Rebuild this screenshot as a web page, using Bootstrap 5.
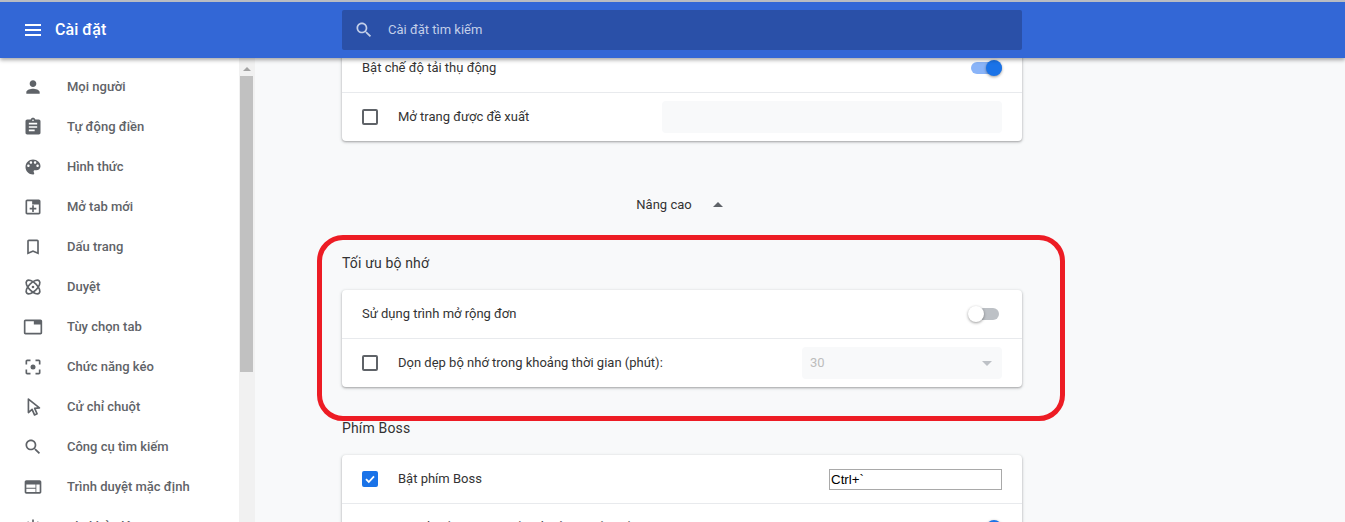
<!DOCTYPE html>
<html lang="vi">
<head>
<meta charset="utf-8">
<title>Cài đặt</title>
<link rel="stylesheet" href="https://cdn.jsdelivr.net/npm/bootstrap@5.3.0/dist/css/bootstrap.min.css">
<style>
html,body{height:522px;overflow:hidden}
body{font-family:Roboto,"Liberation Sans",sans-serif;font-size:13px;background:#f8f9fa;color:#333;border-top:2px solid #b9bcc2}
.top-bar{height:56px;background:#3367d6;box-shadow:0 2px 4px rgba(0,0,0,.35);position:relative;z-index:5;color:#fff}
.menu-btn{width:16px;height:12px;margin-left:25px;border-top:2px solid #fff;border-bottom:2px solid #fff;position:relative;flex:none}
.menu-btn::after{content:"";position:absolute;left:0;right:0;top:3px;height:2px;background:#fff}
.app-title{font-size:16px;font-weight:500;margin-left:14px;width:287px;flex:none;letter-spacing:.05px}
.search-box{width:680px;height:40px;background:#2a50a8;border-radius:2px;flex:none;color:#c3cfe9;padding-left:12px}
.search-box svg{width:20px;height:20px;fill:#c3cfe9;margin-right:14px}
.page-body{height:464px}
.side-nav{width:239px;background:#fff;padding-top:9px;overflow:hidden;flex:none}
.nav-row{height:40px;padding-left:23px;color:#5f6368;font-weight:500;flex:none}
.nav-row svg{width:20px;height:20px;fill:#5f6368;margin-right:24px;flex:none}
.scroll-track{width:16px;background:#f1f1f1;flex:none}
.scroll-arrow{width:0;height:0;border-left:4px solid transparent;border-right:4px solid transparent;border-bottom:4px solid #a3a3a3;margin:9px 0 0 4px}
.scroll-thumb{width:13px;height:296px;background:#c1c1c1;margin:5px 0 0 1px}
.main-pane{overflow:hidden;padding-left:87px}
.main-flow{width:680px;margin-top:-14px}
.set-card{border:0;border-radius:4px;box-shadow:0 1px 2px rgba(60,64,67,.35),0 1px 3px 1px rgba(60,64,67,.12)}
.set-row{height:48px;padding:0 20px;box-sizing:content-box}
.set-row.full-pad{padding:0 20px}
.set-line{border-bottom:1px solid #e8eaed}
.tick{width:16px;height:16px;border:2px solid #5f6368;border-radius:2px;margin-right:20px;flex:none}
.tick-on{background:#1a73e8;border-color:#1a73e8;display:flex;align-items:center;justify-content:center}
.tick-on svg{width:12px;height:12px}
.sw{width:31px;height:12px;border-radius:6px;position:relative;flex:none}
.sw-on{background:#8ab4f8;margin-left:auto}
.sw-off{background:#bdc1c6;margin-left:auto;margin-right:3px;width:29px}
.sw-knob{position:absolute;top:-2px;width:16px;height:16px;border-radius:50%;box-shadow:0 1px 3px rgba(0,0,0,.4)}
.sw-on .sw-knob{right:0;background:#1a73e8}
.sw-off .sw-knob{left:-2px;background:#fff}
.pick-box{width:200px;height:32px;background:#f8f9fa;border-radius:4px;padding:0 8px;color:#bdbdbd;flex:none}
.pick-blank{width:340px}
.pick-arrow{width:0;height:0;border-left:5px solid transparent;border-right:5px solid transparent;border-top:5px solid #bdc1c6;margin-right:2px}
.adv-row{height:48px;margin-top:39px;color:#333;padding:1px 5px 0 0}
.adv-arrow{width:0;height:0;border-left:5px solid transparent;border-right:5px solid transparent;border-bottom:5px solid #5f6368;margin-left:21px}
.sec-title{font-size:14px;height:20px;line-height:20px;color:#333;letter-spacing:.15px;padding-top:1px;margin-top:24px;margin-bottom:18px}
.sec-title-b{margin-top:31px;margin-bottom:17px;padding-top:0}
.key-field{width:173px;height:21px;border:1px solid #a9a9a9;background:#fff;color:#000;font-family:"Liberation Sans",sans-serif;font-size:13.33px;line-height:19px;padding-left:1px;flex:none}
.focus-ring-red{position:absolute;left:317px;top:235px;width:748px;height:186px;border:5px solid #ed1c24;border-radius:26px;z-index:3;pointer-events:none}
</style>
</head>
<body>
<header class="top-bar d-flex align-items-center">
  <div class="menu-btn"></div>
  <div class="app-title">Cài đặt</div>
  <div class="search-box d-flex align-items-center">
    <svg viewBox="0 0 24 24"><path d="M15.5 14h-.79l-.28-.27C15.41 12.59 16 11.11 16 9.5 16 5.91 13.09 3 9.5 3S3 5.91 3 9.5 5.91 16 9.5 16c1.61 0 3.09-.59 4.23-1.57l.27.28v.79l5 4.99L20.49 19l-4.99-5zm-6 0C7.01 14 5 11.99 5 9.5S7.01 5 9.5 5 14 7.01 14 9.5 11.99 14 9.5 14z"/></svg>
    <span>Cài đặt tìm kiếm</span>
  </div>
</header>
<div class="page-body d-flex">
  <nav class="side-nav d-flex flex-column">
    <div class="nav-row d-flex align-items-center"><svg viewBox="0 0 24 24"><path d="M12 12c2.21 0 4-1.79 4-4s-1.79-4-4-4-4 1.79-4 4 1.79 4 4 4zm0 2c-2.67 0-8 1.34-8 4v2h16v-2c0-2.66-5.33-4-8-4z"/></svg>Mọi người</div>
    <div class="nav-row d-flex align-items-center"><svg viewBox="0 0 24 24"><path d="M19 3h-4.18C14.4 1.84 13.3 1 12 1c-1.3 0-2.4.84-2.82 2H5c-1.1 0-2 .9-2 2v14c0 1.1.9 2 2 2h14c1.1 0 2-.9 2-2V5c0-1.1-.9-2-2-2zm-7 0c.55 0 1 .45 1 1s-.45 1-1 1-1-.45-1-1 .45-1 1-1zm2 14H7v-2h7v2zm3-4H7v-2h10v2zm0-4H7V7h10v2z"/></svg>Tự động điền</div>
    <div class="nav-row d-flex align-items-center"><svg viewBox="0 0 24 24"><path d="M12 3c-4.97 0-9 4.03-9 9s4.03 9 9 9c.83 0 1.5-.67 1.5-1.5 0-.39-.15-.74-.39-1.01-.23-.26-.38-.61-.38-.99 0-.83.67-1.5 1.5-1.5H16c2.76 0 5-2.24 5-5 0-4.42-4.03-8-9-8zm-5.5 9c-.83 0-1.5-.67-1.5-1.5S5.67 9 6.5 9 8 9.67 8 10.5 7.33 12 6.5 12zm3-4C8.67 8 8 7.33 8 6.5S8.67 5 9.5 5s1.5.67 1.5 1.5S10.33 8 9.5 8zm5 0c-.83 0-1.5-.67-1.5-1.5S13.67 5 14.5 5s1.5.67 1.5 1.5S15.33 8 14.5 8zm3 4c-.83 0-1.5-.67-1.5-1.5S16.67 9 17.5 9s1.5.67 1.5 1.5-.67 1.5-1.5 1.5z"/></svg>Hình thức</div>
    <div class="nav-row d-flex align-items-center"><svg viewBox="0 0 24 24"><path d="M19 3H5c-1.1 0-2 .9-2 2v14c0 1.1.9 2 2 2h14c1.1 0 2-.9 2-2V5c0-1.1-.9-2-2-2zm0 16H5V5h6v4h8v10zM11 10h2v3h3v2h-3v3h-2v-3H8v-2h3z"/></svg>Mở tab mới</div>
    <div class="nav-row d-flex align-items-center"><svg viewBox="0 0 24 24"><path d="M17 3H7c-1.1 0-1.99.9-1.99 2L5 21l7-3 7 3V5c0-1.1-.9-2-2-2zm0 15l-5-2.18L7 18V5h10v13z"/></svg>Dấu trang</div>
    <div class="nav-row d-flex align-items-center"><svg viewBox="0 0 24 24"><g fill="none" stroke="#5f6368" stroke-width="2"><ellipse cx="12" cy="12" rx="10.5" ry="5" transform="rotate(45 12 12)"/><ellipse cx="12" cy="12" rx="10.5" ry="5" transform="rotate(-45 12 12)"/></g><circle cx="12" cy="12" r="1.6"/></svg>Duyệt</div>
    <div class="nav-row d-flex align-items-center"><svg viewBox="0 0 24 24"><path d="M21 3H3c-1.1 0-2 .9-2 2v14c0 1.1.9 2 2 2h18c1.1 0 2-.9 2-2V5c0-1.1-.9-2-2-2zm0 16H3V5h10v4h8v10z"/></svg>Tùy chọn tab</div>
    <div class="nav-row d-flex align-items-center"><svg viewBox="0 0 24 24"><path d="M5 15H3v4c0 1.1.9 2 2 2h4v-2H5v-4zM5 5h4V3H5c-1.1 0-2 .9-2 2v4h2V5zm14-2h-4v2h4v4h2V5c0-1.1-.9-2-2-2zm0 16h-4v2h4c1.1 0 2-.9 2-2v-4h-2v4z"/><circle cx="12" cy="12" r="3"/></svg>Chức năng kéo</div>
    <div class="nav-row d-flex align-items-center"><svg viewBox="0 0 24 24"><path d="M6.5 2.5v16.2l4.4-3.9 2.9 6.7 3.1-1.4-2.9-6.5 5.7-.5z" fill="none" stroke="#5f6368" stroke-width="2" stroke-linejoin="round"/></svg>Cử chỉ chuột</div>
    <div class="nav-row d-flex align-items-center"><svg viewBox="0 0 24 24"><path d="M15.5 14h-.79l-.28-.27C15.41 12.59 16 11.11 16 9.5 16 5.91 13.09 3 9.5 3S3 5.91 3 9.5 5.91 16 9.5 16c1.61 0 3.09-.59 4.23-1.57l.27.28v.79l5 4.99L20.49 19l-4.99-5zm-6 0C7.01 14 5 11.99 5 9.5S7.01 5 9.5 5 14 7.01 14 9.5 11.99 14 9.5 14z"/></svg>Công cụ tìm kiếm</div>
    <div class="nav-row d-flex align-items-center"><svg viewBox="0 0 24 24"><path d="M20 4H4c-1.1 0-1.99.9-1.99 2L2 18c0 1.1.9 2 2 2h16c1.1 0 2-.9 2-2V6c0-1.1-.9-2-2-2zm-5 14H4v-4h11v4zm0-5H4V9h11v4zm5 5h-4V9h4v9z"/></svg>Trình duyệt mặc định</div>
    <div class="nav-row d-flex align-items-center"><svg viewBox="0 0 24 24"><path d="M13 3h-2v10h2V3zm4.83 2.17l-1.42 1.42C17.99 7.86 19 9.81 19 12c0 3.87-3.13 7-7 7s-7-3.13-7-7c0-2.19 1.01-4.14 2.58-5.42L6.17 5.17C4.23 6.82 3 9.26 3 12c0 4.97 4.03 9 9 9s9-4.03 9-9c0-2.74-1.23-5.18-3.17-6.83z"/></svg>Khi khởi động</div>
  </nav>
  <div class="scroll-track">
    <div class="scroll-arrow"></div>
    <div class="scroll-thumb"></div>
  </div>
  <main class="main-pane flex-grow-1">
    <div class="main-flow">
      <section class="card set-card">
        <div class="set-row set-line d-flex align-items-center"><span>Bật chế độ tải thụ động</span><span class="sw sw-on"><span class="sw-knob"></span></span></div>
        <div class="set-row d-flex align-items-center justify-content-between">
          <div class="d-flex align-items-center"><span class="tick"></span><span>Mở trang được đề xuất</span></div>
          <div class="pick-box pick-blank"></div>
        </div>
      </section>
      <div class="adv-row d-flex align-items-center justify-content-center"><span>Nâng cao</span><span class="adv-arrow"></span></div>
      <h2 class="sec-title fw-normal">Tối ưu bộ nhớ</h2>
      <section class="card set-card">
        <div class="set-row set-line d-flex align-items-center"><span>Sử dụng trình mở rộng đơn</span><span class="sw sw-off"><span class="sw-knob"></span></span></div>
        <div class="set-row d-flex align-items-center justify-content-between">
          <div class="d-flex align-items-center"><span class="tick"></span><span>Dọn dẹp bộ nhớ trong khoảng thời gian (phút):</span></div>
          <div class="pick-box d-flex align-items-center justify-content-between"><span>30</span><span class="pick-arrow"></span></div>
        </div>
      </section>
      <h2 class="sec-title sec-title-b fw-normal">Phím Boss</h2>
      <section class="card set-card">
        <div class="set-row set-line d-flex align-items-center justify-content-between">
          <div class="d-flex align-items-center"><span class="tick tick-on"><svg viewBox="0 0 12 12"><path d="M2 6.2l2.8 2.8L10 3.4" fill="none" stroke="#fff" stroke-width="1.8"/></svg></span><span>Bật phím Boss</span></div>
          <div class="key-field">Ctrl+`</div>
        </div>
        <div class="set-row d-flex align-items-center justify-content-between">
          <span>Sau khi nhấn tổ hợp phím, ẩn tất cả các cửa sổ</span>
          <span class="sw sw-on"><span class="sw-knob"></span></span>
        </div>
      </section>
    </div>
  </main>
</div>
<div class="focus-ring-red"></div>
</body>
</html>
